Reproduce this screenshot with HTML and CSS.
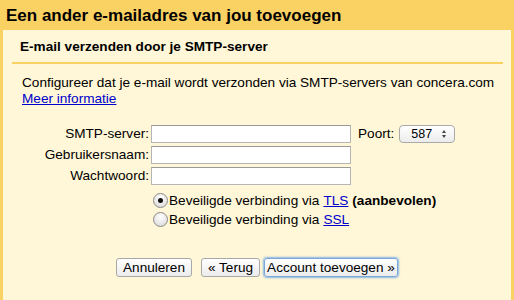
FILE: index.html
```html
<!DOCTYPE html>
<html>

<head>
    <title>SMTP-server</title>
  <link rel="stylesheet" href="styles.css">
</head>

<body class="background">
    <h1 class="title">Een ander e-mailadres van jou toevoegen</h1>
    <div class="panel">
        <h2 class="subhead">E-mail verzenden door je SMTP-server</h2>
        <div class="rule"></div>
        <p class="intro">Configureer dat je e-mail wordt verzonden via SMTP-servers van concera.com<br>
            <a href="#">Meer informatie</a></p>

        <div class="form">
            <div class="row">
                <label class="lbl">SMTP-server:</label>
                <input type="text" class="field">
                <label class="port">Poort:</label>
                <div class="select">587 <span class="arrows"><i class="up"></i><i class="down"></i></span></div>
            </div>
            <div class="row">
                <label class="lbl">Gebruikersnaam:</label>
                <input type="text" class="field">
            </div>
            <div class="row">
                <label class="lbl">Wachtwoord:</label>
                <input type="password" class="field">
            </div>
            <div class="radios">
                <label class="opt"><input type="radio" name="sec" checked> Beveiligde verbinding via <a href="#">TLS</a> <b>(aanbevolen)</b></label>
                <label class="opt"><input type="radio" name="sec"> Beveiligde verbinding via <a href="#">SSL</a></label>
            </div>
        </div>

        <div class="buttons">
            <button class="btn">Annuleren</button>
            <button class="btn back">&laquo; Terug</button>
            <button class="btn main">Account toevoegen &raquo;</button>
        </div>
    </div>
</body>

</html>
```

FILE: styles.css
```css
body {
    margin: 0;
    background-color: #fad163;
    font-family: "Liberation Sans", Arial, sans-serif;
    font-size: 13.6px;
    color: #000;
    height: 300px;
    overflow: hidden;
}
.title {
    margin: 0;
    padding: 5px 6px 4px;
    font-size: 17px;
    line-height: 21px;
    height: 21px;
}
.panel {
    margin: 0 3px;
    background-color: #fff7d7;
    height: 270px;
}
.subhead {
    margin: 0;
    padding: 9px 17px 0;
    font-size: 13.6px;
    line-height: 16px;
    height: 23px;
}
.rule {
    margin: 0 8px 0 9px;
    border-top: 2px solid #fad163;
}
.intro {
    margin: 0;
    padding: 11px 0 0 19px;
    line-height: 16px;
    white-space: nowrap;
}
a { color: #0000cc; }
.form { padding-top: 16px; }
.row {
    display: flex;
    align-items: center;
    height: 21px;
}
.lbl {
    width: 146px;
    text-align: right;
    padding-right: 2px;
}
.field {
    box-sizing: border-box;
    width: 200px;
    height: 18px;
    margin: 0;
    border: 1px solid #b5b5b5;
    border-top-color: #999;
    background: #fff;
}
.port { margin-left: 7px; margin-right: 5px; }
.select {
    box-sizing: border-box;
    width: 56px;
    height: 18px;
    border: 1px solid #aaa;
    border-radius: 4px;
    background: linear-gradient(#fff, #ececec);
    padding-left: 11px;
    font-size: 12.5px;
    line-height: 16px;
    position: relative;
}
.arrows {
    position: absolute;
    right: 8px;
    top: 4px;
    display: flex;
    flex-direction: column;
    gap: 2px;
}
.up, .down {
    width: 0;
    height: 0;
    border-left: 2px solid transparent;
    border-right: 2px solid transparent;
}
.up { border-bottom: 3px solid #444; }
.down { border-top: 3px solid #444; }
.radios { padding: 5px 0 0 150px; }
.opt {
    display: flex;
    align-items: center;
    height: 19px;
}
.opt input {
    appearance: none;
    margin: 0 1px 0 0;
    width: 15px;
    height: 15px;
    border: 1px solid #8a8a8a;
    border-radius: 50%;
    background: radial-gradient(circle at 50% 30%, #fff, #d6d6d6);
    display: grid;
    place-items: center;
}
.opt input:checked::after {
    content: "";
    width: 5px;
    height: 5px;
    border-radius: 50%;
    background: #111;
}
.opt a, .opt b { margin-left: 4px; }
.buttons {
    padding: 29px 0 0 113px;
    display: flex;
}
.btn {
    height: 19px;
    padding: 0 6px;
    font-family: "Liberation Sans", Arial, sans-serif;
    font-size: 13.6px;
    border: 1px solid #a8a8a8;
    border-radius: 3px;
    background: linear-gradient(#fff, #ececec);
    color: #000;
    margin-right: 9px;
}
.back { margin-right: 4px; }
.main {
    padding: 0 2px;
    border-color: #7aa7d8;
    box-shadow: 0 0 2px 1px #8cb6e6;
}
```
